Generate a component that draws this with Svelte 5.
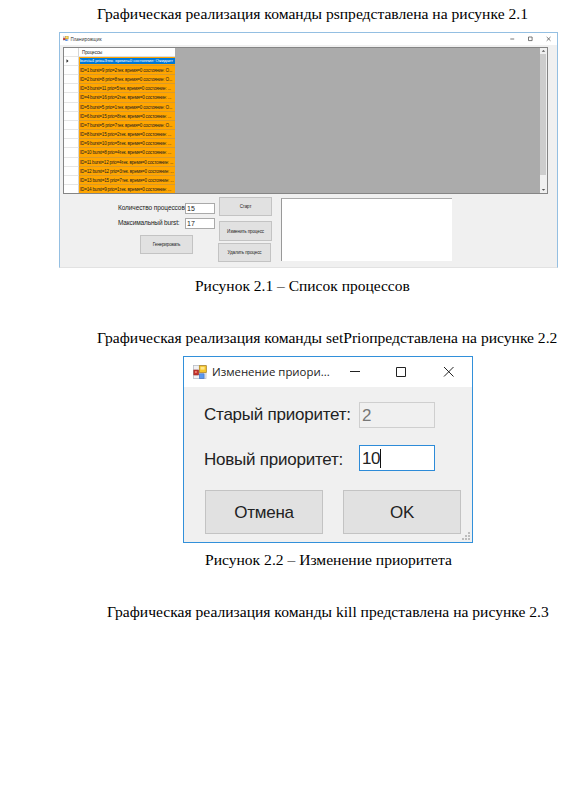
<script>
  const rows = [
    'burst=4 prio=3тек. время=0 состояние: Ожидает',
    'ID=1 burst=9 prio=2тек. время=0 состояние: О...',
    'ID=2 burst=8 prio=8тек. время=0 состояние: О...',
    'ID=3 burst=11 prio=5тек. время=0 состояние: ...',
    'ID=4 burst=16 prio=2тек. время=0 состояние: ...',
    'ID=5 burst=5 prio=1тек. время=0 состояние: О...',
    'ID=6 burst=15 prio=8тек. время=0 состояние: ...',
    'ID=7 burst=5 prio=7тек. время=0 состояние: О...',
    'ID=8 burst=15 prio=2тек. время=0 состояние: ...',
    'ID=9 burst=10 prio=5тек. время=0 состояние: ...',
    'ID=10 burst=8 prio=4тек. время=0 состояние: ...',
    'ID=11 burst=12 prio=4тек. время=0 состояние: ...',
    'ID=12 burst=12 prio=3тек. время=0 состояние: ...',
    'ID=13 burst=15 prio=7тек. время=0 состояние: ...',
    'ID=14 burst=9 prio=1тек. время=0 состояние: ...'
  ];
</script>

{#snippet formIcon(size)}
  <svg width={size} height={size} viewBox="0 0 14 14">
    <rect x="0.5" y="0.5" width="12.5" height="13" fill="#f1f1f3" stroke="#b9bdc6" stroke-width=".8" />
    <rect x="0.8" y="5" width="4.8" height="5" fill="#c8322b" stroke="#8d2625" stroke-width=".6" />
    <rect x="2" y="6.2" width="1.8" height="1.6" fill="#ee8f83" />
    <rect x="6.3" y="0.7" width="7" height="6.8" fill="#f6c62c" stroke="#a87c1b" stroke-width=".7" />
    <rect x="7.6" y="1.8" width="4" height="2.8" fill="#ffe78a" />
    <rect x="6.3" y="8.8" width="4.8" height="4.7" fill="#5b98ee" stroke="#3d69bb" stroke-width=".6" />
  </svg>
{/snippet}

<main>
  <p class="line first">Графическая реализация команды psпредставлена на рисунке 2.1</p>

  <section class="planner">
    <header>
      {@render formIcon(5.5)}
      <span class="title">Планировщик</span>
      <svg class="controls" width="42" height="6" viewBox="0 0 42 6" fill="none" stroke="#555" stroke-width=".8">
        <path d="M0.3 3H4.2M18.5 1h3.6v3.6h-3.6zM36.7 1l3.8 3.8M40.5 1l-3.8 3.8" />
      </svg>
    </header>
    <div class="grid">
      <div class="table">
        <div class="row head"><i></i><b>Процессы</b></div>
        {#each rows as row, n}
          <div class="row" class:selected={n === 0}>
            <i>{#if n === 0}<svg width="3" height="4" viewBox="0 0 3 4"><path d="M0.5 0.3L2.5 2L0.5 3.7z" fill="#222" /></svg>{/if}</i>
            <b><span>{row}</span></b>
          </div>
        {/each}
      </div>
      <div class="scroll">
        <svg width="7" height="6" viewBox="0 0 7 6"><path d="M1.8 3.7L3.5 2l1.7 1.7z" fill="#555" /></svg>
        <div class="thumb"></div>
        <svg width="7" height="6" viewBox="0 0 7 6"><path d="M1.8 2L3.5 3.7L5.2 2z" fill="#555" /></svg>
      </div>
    </div>
    <div class="panel">
      <div class="settings">
        <div class="field"><label for="count">Количество процессов</label><div class="box" id="count">15</div></div>
        <div class="field second"><label for="burst" class="burst">Максимальный burst:</label><div class="box" id="burst">17</div></div>
        <button class="generate">Генерировать</button>
      </div>
      <div class="actions">
        <button>Старт</button>
        <button class="change">Изменить процесс</button>
        <button class="remove">Удалить процесс</button>
      </div>
      <div class="log"></div>
    </div>
  </section>

  <p class="line cap1">Рисунок 2.1 – Список процессов</p>
  <p class="line text2">Графическая реализация команды setPrioпредставлена на рисунке 2.2</p>

  <section class="dialog">
    <header>
      {@render formIcon(14)}
      <span class="title">Изменение приори...</span>
      <svg class="controls" width="106" height="12" viewBox="0 0 106 12" fill="none" stroke="#222" stroke-width="1">
        <path d="M1 5.5H11M47.5 1.5h9v9h-9zM95 1l9.5 9.5M104.5 1l-9.5 9.5" />
      </svg>
    </header>
    <div class="form">
      <div class="entry"><span class="label">Старый приоритет:</span><div class="value disabled">2</div></div>
      <div class="entry"><span class="label lower">Новый приоритет:</span><div class="value active">10<i></i></div></div>
      <div class="buttons"><button>Отмена</button><button>OK</button></div>
    </div>
    <svg class="grip" width="9" height="9" viewBox="0 0 9 9" fill="#bdbdbd">
      <path d="M6 0h2v2H6zM3 3h2v2H3zM6 3h2v2H6zM0 6h2v2H0zM3 6h2v2H3zM6 6h2v2H6z" />
    </svg>
  </section>

  <p class="line cap2">Рисунок 2.2 – Изменение приоритета</p>
  <p class="line text3">Графическая реализация команды kill представлена на рисунке 2.3</p>
</main>

<style>
  :global(body) { background: #fff; overflow: hidden; }
  main { width: 570px; height: 799px; overflow: hidden; display: flex; flex-direction: column; align-items: flex-start; background: #fff; }
  main :global(*) { box-sizing: border-box; }
  svg { display: block; flex: none; }
  .line { margin: 0; height: 18px; line-height: 18px; font-family: "Liberation Serif", serif; font-size: 15.58px; color: #000; white-space: nowrap; }
  .first { margin: 5px 0 9px 97px; }
  .cap1 { margin: 9px 0 0 195px; font-size: 15.5px; }
  .text2 { margin: 34px 0 9px 97px; }
  .cap2 { margin: 8px 0 0 205px; }
  .text3 { margin: 34px 0 0 107px; }
  button { padding: 0; border: 1px solid #c3c3c3; border-radius: 0; background: #e1e1e1; color: #222; font-family: "Liberation Sans", sans-serif; white-space: nowrap; }

  .planner { margin-left: 59px; width: 499px; height: 236px; background: #f0f0f0; border: 1px solid #94bfe2; border-bottom-color: #e2e2e2; font-family: "Liberation Sans", sans-serif; color: #222; }
  .planner header { height: 12px; background: #fff; display: flex; align-items: center; padding: 0 5px 1px 3px; }
  .planner .title { margin-left: 2px; font: 4.5px "Open Sans", sans-serif; }
  .controls { margin-left: auto; }
  .grid { margin: 2px 0 0 3px; width: 485px; height: 147px; background: #ababab; border: 1px solid #858585; display: flex; justify-content: space-between; overflow: hidden; }
  .table { width: 111px; height: 145px; overflow: hidden; }
  .row { height: 9.2px; display: flex; }
  .row i { width: 15px; flex: none; background: #fff; border-right: 1px solid #d6d6d6; border-bottom: 1px solid #e5e5e5; padding: 2px 0 0 2px; }
  .row b { width: 96px; padding-left: 1px; background: #ffa500; border-bottom: 1px solid #d99a2a; font-weight: 400; font-size: 4.6px; letter-spacing: -.2px; line-height: 9px; white-space: nowrap; overflow: hidden; }
  .row.head { height: 8.6px; }
  .row.head b { background: #fff; font-size: 4.5px; letter-spacing: -.1px; line-height: 9px; padding-left: 3px; border-bottom-color: #ddd; }
  .selected b { display: flex; align-items: center; }
  .selected span { width: 95px; height: 6px; line-height: 6px; background: #0078d7; color: #fff; overflow: hidden; font-size: 4.4px; letter-spacing: -.1px; }
  .scroll { width: 7px; background: #f0f0f0; display: flex; flex-direction: column; justify-content: space-between; }
  .thumb { height: 121px; margin: 0 1px auto 0; background: #cdcdcd; }
  .panel { display: flex; align-items: flex-start; padding: 3px 0 0 58px; }
  .settings { width: 101px; padding-top: 6px; }
  .field { height: 11px; display: flex; align-items: center; white-space: nowrap; }
  .field label { width: 67px; flex: none; font-size: 6.5px; letter-spacing: -.08px; line-height: 9px; padding-bottom: 2px; }
  .field .burst { letter-spacing: -.14px; }
  .box { width: 30px; height: 11px; background: #fff; border: 1px solid #aaa; padding-left: 1px; font: 7px/9px "Liberation Sans", sans-serif; }
  .second { margin-top: 4px; }
  .generate { display: block; width: 53px; height: 19px; margin: 6px 0 0 22px; }
  .planner button { font-size: 4.5px; letter-spacing: -.1px; }
  .actions { width: 53px; display: flex; flex-direction: column; }
  .actions button { width: 53px; height: 19px; }
  .actions .change { margin-top: 5px; height: 20px; }
  .actions .remove { margin-top: 2px; margin-left: -1px; }
  .log { margin: 1px 0 0 9px; width: 171px; height: 63px; background: #fff; border-top: 1px solid #aaa; border-left: 1px solid #999; }

  .dialog { position: relative; margin-left: 183px; width: 290px; height: 187px; background: #f0f0f0; border: 1px solid #3290da; color: #222; }
  .dialog header { height: 30px; display: flex; align-items: center; background: #fff; padding: 0 17px 0 9px; }
  .dialog .title { margin-left: 5px; font: 11.4px "Open Sans", sans-serif; white-space: nowrap; padding-bottom: 2px; }
  .form { padding: 15px 0 0 20px; font-family: "Liberation Sans", sans-serif; font-size: 17px; }
  .entry { height: 26px; margin-bottom: 17px; display: flex; align-items: center; }
  .label { width: 155px; white-space: nowrap; letter-spacing: -.24px; }
  .lower { padding-top: 3px; letter-spacing: -.24px; }
  .value { width: 76px; height: 26px; line-height: 24px; padding: 1px 0 0 2px; border: 1px solid #cfcfcf; display: flex; align-items: center; letter-spacing: -.4px; }
  .disabled { color: #777; }
  .active { background: #fff; border: 1px solid #2d8bd8; }
  .active i { width: 1px; height: 19px; background: #111; }
  .buttons { display: flex; gap: 20px; padding: 2px 0 0 1px; }
  .buttons button { width: 118px; height: 44px; font-size: 17px; letter-spacing: -.25px; padding-top: 1px; }
  .grip { position: absolute; right: 1px; bottom: 1px; }
</style>
